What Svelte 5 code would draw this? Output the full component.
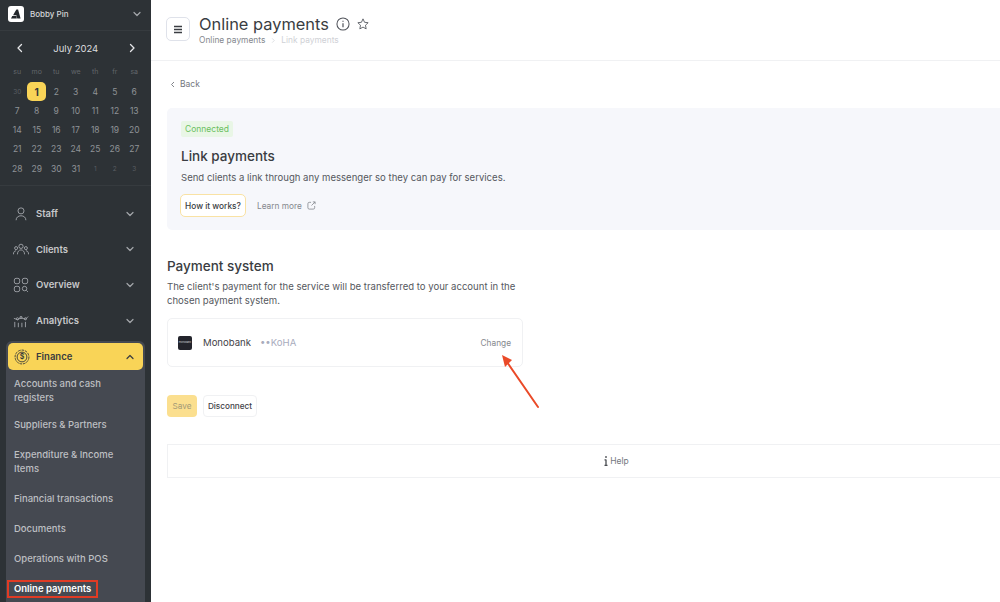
<script lang="ts">
	const weekdays = ['su', 'mo', 'tu', 'we', 'th', 'fr', 'sa'];
	const days = [
		{ d: 30, dim: true }, ...Array.from({ length: 31 }, (_, i) => ({ d: i + 1, dim: false })),
		{ d: 1, dim: true }, { d: 2, dim: true }, { d: 3, dim: true }
	];
	const closedMenu = ['Staff', 'Clients', 'Overview', 'Analytics'];
	const subMenu = [
		'Accounts and cash registers',
		'Suppliers & Partners',
		'Expenditure & Income Items',
		'Financial transactions',
		'Documents',
		'Operations with POS'
	];
</script>

{#snippet chevron(up = false)}
	<svg class="chev" class:up width="10" height="10" viewBox="0 0 10 10"><path d="M2 3.500 5 6.500 8 3.500" fill="none" stroke="currentColor" stroke-width="1.200" stroke-linecap="round" stroke-linejoin="round" /></svg>
{/snippet}

{#snippet menuIcon(name: string)}
	<svg class="micon" width="16" height="16" viewBox="0 0 18 18" fill="none" stroke="#a4a7ad" stroke-width="1">
		{#if name === 'Staff'}
			<circle cx="9" cy="5.500" r="3.400" />
			<path d="M3.500 16c0-3.200 2.400-5 5.500-5s5.500 1.800 5.500 5" />
		{:else if name === 'Clients'}
			<circle cx="9" cy="6" r="2.400" />
			<circle cx="3.500" cy="8" r="1.700" />
			<circle cx="14.500" cy="8" r="1.700" />
			<path d="M5 15c0-3 1.600-5 4-5s4 2 4 5M0.500 15c0-2.500 1-4 3-4M17.500 15c0-2.500-1-4-3-4" />
		{:else if name === 'Overview'}
			<rect x="1.500" y="1.500" width="6" height="6" rx="2" />
			<rect x="10.500" y="1.500" width="6" height="6" rx="2" />
			<rect x="1.500" y="10.500" width="6" height="6" rx="2" />
			<circle cx="13" cy="13" r="2.500" />
			<path d="M15 15l1.800 1.800" />
		{:else}
			<path d="M2 10v6M6 11v5M10 11v5M14 10v6" />
			<path d="M1 6l4 1.500 4-2 5 1.500 3-3" />
			<circle cx="5" cy="6.500" r="1.200" />
			<circle cx="9" cy="5" r="1.200" />
			<circle cx="14" cy="6.500" r="1.200" />
		{/if}
	</svg>
{/snippet}

<div class="page">
	<aside class="sidebar">
		<div class="account">
			<div class="logo">
				<svg width="10" height="10" viewBox="0 0 12 11"><path d="M6.500 0H8.500L11.500 11H7.500L6.500 7H2.500L5 2.500ZM0 11 1.500 8H6.500L7 11Z" fill="#23272b" /></svg>
			</div>
			<span class="account-name">Bobby Pin</span>
			<span class="account-chev">{@render chevron()}</span>
		</div>

		<div class="calendar">
			<div class="cal-head">
				<svg width="10" height="10" viewBox="0 0 10 10"><path d="M6.500 1.500 3 5 6.500 8.500" fill="none" stroke="#e6e7e9" stroke-width="1.300" stroke-linecap="round" stroke-linejoin="round" /></svg>
				<span>July 2024</span>
				<svg width="10" height="10" viewBox="0 0 10 10"><path d="M3.500 1.500 7 5 3.500 8.500" fill="none" stroke="#e6e7e9" stroke-width="1.300" stroke-linecap="round" stroke-linejoin="round" /></svg>
			</div>
			<div class="cal-grid">
				{#each weekdays as w}
					<span class="wd">{w}</span>
				{/each}
				{#each days as day}
					<span class="day" class:dim={day.dim} class:today={day.d === 1 && !day.dim}>{day.d}</span>
				{/each}
			</div>
		</div>

		<nav class="menu">
			{#each closedMenu as item}
				<div class="menu-item">
					{@render menuIcon(item)}
					<span>{item}</span>
					{@render chevron()}
				</div>
			{/each}

			<div class="finance">
				<div class="finance-head">
					<svg class="micon" width="16" height="16" viewBox="0 0 18 18" fill="none" stroke="#34373b">
						<circle cx="9" cy="9" r="7.800" stroke-width="1" stroke-dasharray="3 1" />
						<circle cx="9" cy="9" r="5.500" stroke-width="1" />
						<text x="9" y="11.800" text-anchor="middle" font-size="8" font-weight="600" fill="#34373b" stroke="none" font-family="Inter, sans-serif">$</text>
					</svg>
					<span>Finance</span>
					{@render chevron(true)}
				</div>
				{#each subMenu as sub}
					<div class="sub">{sub}</div>
				{/each}
				<div class="current"><span>Online payments</span></div>
			</div>
		</nav>
	</aside>

	<main class="content">
		<header class="topbar">
			<button class="burger" aria-label="Menu">
				<svg width="10" height="9" viewBox="0 0 10 9"><path d="M1 1.500H9M1 4.500H9M1 7.500H9" stroke="#3a3d42" stroke-width="1.300" /></svg>
			</button>
			<div>
				<div class="title-row">
					<h1>Online payments</h1>
					<svg width="14" height="14" viewBox="0 0 15 15" fill="none" stroke="#50535a" stroke-width="1.100"><circle cx="7.500" cy="7.500" r="6.500" /><path d="M7.500 6.800V11" stroke-width="1.300" /><path d="M7.500 4V5.200" stroke-width="1.300" /></svg>
					<svg width="12" height="12" viewBox="0 0 14 14" fill="none" stroke="#50535a" stroke-width="1"><path d="M7 1 8.800 5 13 5.500 9.900 8.400 10.700 12.700 7 10.600 3.300 12.700 4.100 8.400 1 5.500 5.200 5Z" stroke-linejoin="round" /></svg>
				</div>
				<div class="crumbs">
					<span>Online payments</span>
					<svg width="6" height="7" viewBox="0 0 7 7"><path d="M2.500 1 5 3.500 2.500 6" fill="none" stroke="#cfd1d6" stroke-width="0.800" /></svg>
					<span class="crumb-last">Link payments</span>
				</div>
			</div>
		</header>

		<div class="body">
			<div class="back">
				<svg width="6" height="7" viewBox="0 0 6 7"><path d="M4 1 1.500 3.500 4 6" fill="none" stroke="#74777e" stroke-width="0.900" /></svg>
				<span>Back</span>
			</div>

			<section class="panel">
				<span class="badge">Connected</span>
				<h2>Link payments</h2>
				<p>Send clients a link through any messenger so they can pay for services.</p>
				<div class="panel-actions">
					<button class="how">How it works?</button>
					<span class="learn">Learn more</span>
					<svg width="9" height="9" viewBox="0 0 10 10" fill="none" stroke="#85888e" stroke-width="0.900"><path d="M4.500 1.500H2.500A1.500 1.500 0 0 0 1 3V7.500A1.500 1.500 0 0 0 2.500 9H7A1.500 1.500 0 0 0 8.500 7.500V5.500M5 5 9 1M6.500 1H9V3.500" /></svg>
				</div>
			</section>

			<h2 class="system-title">Payment system</h2>
			<p class="system-text">The client's payment for the service will be transferred to your account in the chosen payment system.</p>

			<div class="system-card">
				<div class="mono-logo"><span>monobank</span></div>
				<span class="mono-name">Monobank</span>
				<span class="mono-acc">••KoHA</span>
				<span class="change">Change</span>
				<svg class="arrow" width="44" height="56" viewBox="0 0 44 56">
					<path d="M39 54 8 9" stroke="#ea4a28" stroke-width="2" stroke-linecap="round" fill="none" />
					<path d="M3 2 13 7 6 14Z" fill="#ea4a28" />
				</svg>
			</div>

			<div class="actions">
				<button class="save">Save</button>
				<button class="disconnect">Disconnect</button>
			</div>

			<div class="help">
				<svg width="4" height="10" viewBox="0 0 4 10"><path d="M2 0V2M2 3.500V10M0.500 3.800H2M0.500 9.500H3.500" stroke="#4a4d52" stroke-width="1.300" /></svg>
				<span>Help</span>
			</div>
		</div>
	</main>
</div>

<style>
	:global(body) {
		margin: 0;
		background: #fff;
	}
	.page {
		display: flex;
		width: 1000px;
		height: 602px;
		overflow: hidden;
		font-family: Inter, 'Liberation Sans', sans-serif;
		color: #3a3d42;
	}
	.sidebar {
		flex: 0 0 151px;
		background: #2d3236;
		overflow: hidden;
	}
	.account {
		display: flex;
		align-items: center;
		height: 28px;
		padding: 0 9px 2px 8px;
		border-bottom: 1px solid #363b3f;
	}
	.logo {
		display: flex;
		align-items: center;
		justify-content: center;
		width: 16px;
		height: 16px;
		background: #fff;
		border-radius: 3px;
	}
	.account-name {
		margin-left: 6px;
		font-size: 8px;
		font-weight: 500;
		color: #d5d6d8;
		flex: 1;
	}
	.account-chev {
		display: flex;
		color: #d5d6d8;
	}
	.calendar {
		height: 146px;
		border-bottom: 1px solid #363b3f;
		padding: 8px 7px 0 7.500px;
	}
	.cal-head {
		display: flex;
		align-items: center;
		justify-content: space-between;
		padding: 0 7px;
		height: 18px;
		font-size: 9.500px;
		color: #dcdddf;
	}
	.cal-grid {
		display: grid;
		grid-template-columns: repeat(7, 19.500px);
		grid-template-rows: 21px;
		grid-auto-rows: 19.250px;
		margin-top: 4px;
		align-items: center;
		justify-items: center;
	}
	.wd {
		font-size: 7px;
		color: #62666b;
	}
	.day {
		font-size: 8.500px;
		color: #8f9296;
	}
	.day.dim {
		font-size: 6.500px;
		color: #5a5e63;
	}
	.today {
		display: flex;
		align-items: center;
		justify-content: center;
		width: 19px;
		height: 19px;
		border-radius: 5px;
		background: #f9d457;
		color: #33363a;
		font-weight: 700;
		font-size: 10px;
	}
	.menu {
		padding-top: 10px;
	}
	.menu-item {
		display: flex;
		align-items: center;
		height: 35.600px;
		padding: 0 16px 0 13px;
		font-size: 9.500px;
		font-weight: 600;
		color: #c7c8ca;
	}
	.micon {
		flex: none;
		margin-right: 7px;
	}
	.menu-item span,
	.finance-head span {
		flex: 1;
	}
	.chev.up {
		transform: rotate(180deg);
	}
	.chev {
		color: #a4a7ab;
	}
	.finance {
		margin: 3px 6px 0;
		padding: 2px;
		background: #454951;
		border-radius: 6px 6px 0 0;
		height: 300px;
	}
	.finance-head {
		display: flex;
		align-items: center;
		height: 27px;
		padding: 0 8px 0 6px;
		background: #f9d457;
		border-radius: 5px;
		font-size: 9.500px;
		font-weight: 600;
		color: #3a3c40;
	}
	.finance-head .chev {
		color: #3a3c40;
	}
	.finance-head .micon {
		margin-right: 6px;
	}
	.sub {
		padding: 8px 4px 8px 6px;
		font-size: 9.500px;
		font-weight: 500;
		line-height: 14px;
		color: #bdbfc2;
	}
	.sub:nth-child(2) {
		padding-top: 7px;
		padding-bottom: 5px;
	}
	.current {
		margin: 6px 0 0 -1px;
		font-size: 9.500px;
		font-weight: 600;
		color: #fff;
	}
	.current span {
		display: inline-block;
		padding: 0 5px;
		line-height: 14px;
		border: 2px solid #e03b24;
	}
	.content {
		flex: 1;
		min-width: 0;
	}
	.topbar {
		display: flex;
		align-items: center;
		height: 60px;
		padding-left: 15px;
		gap: 9px;
		border-bottom: 1px solid #f0f1f3;
	}
	.burger {
		display: flex;
		align-items: center;
		justify-content: center;
		width: 24px;
		height: 24px;
		margin-top: -2px;
		padding: 0;
		background: #fff;
		border: 1px solid #dfe2ea;
		border-radius: 5px;
	}
	.title-row {
		display: flex;
		align-items: center;
		gap: 7px;
	}
	h1 {
		margin: 0;
		font-size: 16.400px;
		font-weight: 400;
		line-height: 20px;
		color: #3a3d42;
	}
	.crumbs {
		display: flex;
		align-items: center;
		gap: 5px;
		font-size: 8.400px;
		color: #85888e;
		line-height: 12px;
	}
	.crumb-last {
		color: #cfd1d6;
	}
	.body {
		padding: 17px 0 0 16px;
	}
	.back {
		display: flex;
		align-items: center;
		gap: 4px;
		height: 12px;
		font-size: 8.500px;
		color: #74777e;
		margin-left: 3px;
	}
	.panel {
		margin-top: 18px;
		height: 122px;
		box-sizing: border-box;
		padding: 13px 14px;
		background: #f6f7fb;
		border-radius: 5px 0 0 5px;
	}
	.badge {
		display: inline-block;
		padding: 0 4px;
		height: 16px;
		line-height: 16px;
		background: #e9f6e6;
		border-radius: 2px;
		font-size: 8.500px;
		color: #6abf5f;
		vertical-align: top;
	}
	h2 {
		margin: 5px 0 0;
		font-size: 13.500px;
		font-weight: 500;
		line-height: 20px;
		color: #3a3d42;
	}
	.panel p {
		margin: 5px 0 0;
		font-size: 9.570px;
		line-height: 14px;
		color: #55585e;
	}
	.panel-actions {
		display: flex;
		align-items: center;
		margin-top: 9px;
		height: 23px;
	}
	.how {
		height: 23px;
		width: 66px;
		margin-left: -1px;
		padding: 0;
		background: #fff;
		border: 1px solid #f9e2a4;
		border-radius: 5px;
		font-family: inherit;
		font-size: 8.300px;
		font-weight: 500;
		color: #3a3d42;
	}
	.learn {
		margin-left: 11px;
		margin-right: 5px;
		font-size: 8.300px;
		color: #85888e;
	}
	.system-title {
		margin: 26px 0 0;
	}
	.system-text {
		margin: 4px 0 0;
		width: 360px;
		font-size: 9.570px;
		line-height: 14px;
		color: #55585e;
	}
	.system-card {
		position: relative;
		display: flex;
		align-items: center;
		width: 356px;
		height: 49px;
		box-sizing: border-box;
		margin-top: 10px;
		padding: 0 11px 0 10px;
		border: 1px solid #f0f1f3;
		border-radius: 5px;
	}
	.mono-logo {
		display: flex;
		align-items: center;
		justify-content: center;
		width: 14px;
		height: 14px;
		background: #23242c;
		border-radius: 2px;
		overflow: hidden;
	}
	.mono-logo span {
		font-size: 2.500px;
		color: #cfd0d4;
	}
	.mono-name {
		margin-left: 11px;
		font-size: 9.570px;
		color: #3f4248;
	}
	.mono-acc {
		margin-left: 9px;
		font-size: 9.570px;
		color: #a8acbd;
	}
	.change {
		margin-left: auto;
		font-size: 8.300px;
		color: #85888e;
	}
	.arrow {
		position: absolute;
		left: 331px;
		top: 34px;
	}
	.actions {
		display: flex;
		gap: 6px;
		margin-top: 28px;
	}
	.actions button {
		height: 22px;
		padding: 0;
		border-radius: 4px;
		font-family: inherit;
		font-size: 8.200px;
	}
	.save {
		width: 30px;
		background: #fbdf8f;
		border: none;
		color: #a39a77;
	}
	.disconnect {
		width: 54px;
		background: #fff;
		border: 1px solid #f0f1f3;
		color: #3f4248;
		font-weight: 500;
	}
	.help {
		display: flex;
		align-items: center;
		justify-content: center;
		gap: 2px;
		height: 32px;
		margin: 27px -65px 0 0;
		border: 1px solid #f0f1f3;
		border-right: none;
		font-size: 8.500px;
		color: #74777e;
	}
</style>
